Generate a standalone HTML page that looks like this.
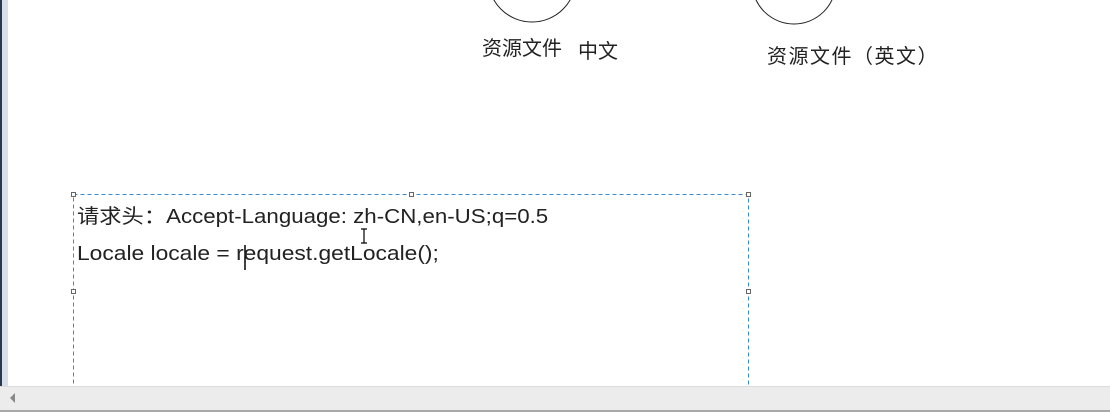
<!DOCTYPE html>
<html><head><meta charset="utf-8"><style>
body{margin:0;width:1110px;height:412px;overflow:hidden;background:#fff;position:relative;font-family:"Liberation Sans","Noto Sans CJK SC",sans-serif;color:#222}
.a{position:absolute}
.h{position:absolute;width:5px;height:5px;border:1px solid #666;background:#fff;box-sizing:border-box}
.t{position:absolute;font-size:20px;line-height:24px;white-space:nowrap;transform-origin:0 50%}
</style></head><body>
<div class="a" style="left:0;top:0;width:2px;height:386px;background:#2a3a4a"></div>
<div class="a" style="left:2px;top:0;width:6px;height:386px;background:#d6e0ec"></div>
<svg class="a" style="left:0;top:0" width="1110" height="412">
<circle cx="532" cy="-22" r="44" fill="none" stroke="#222" stroke-width="1"/>
<circle cx="794" cy="-18" r="42" fill="none" stroke="#222" stroke-width="1"/>
<rect x="73.5" y="194.5" width="675" height="200" fill="none" stroke="#3a8ad0" stroke-dasharray="4,3"/>
<line x1="245" y1="245" x2="245" y2="270" stroke="#000" stroke-width="1.5"/>
<path d="M361 229h6M364 229v14M361 243h6" stroke="#000" stroke-width="1.2" fill="none"/>
</svg>
<div class="h" style="left:71px;top:192px"></div>
<div class="h" style="left:409px;top:192px"></div>
<div class="h" style="left:746px;top:192px"></div>
<div class="h" style="left:71px;top:289px"></div>
<div class="h" style="left:746px;top:289px"></div>
<div class="t" style="left:482px;top:37px;font-size:20px">资源文件</div>
<div class="t" style="left:578px;top:40px;font-size:20px">中文</div>
<div class="t" style="left:767px;top:45px;font-size:20px;letter-spacing:1.5px">资源文件（英文）</div>
<div class="t" style="left:77px;top:205px;transform:scaleX(1.114)">请求头：Accept-Language: zh-CN,en-US;q=0.5</div>
<div class="t" style="left:77px;top:242px;transform:scaleX(1.14)">Locale locale = request.getLocale();</div>
<div class="a" style="left:0;top:386px;width:1110px;height:24px;background:#ececec;border-top:1px solid #dcdcdc"></div>
<div class="a" style="left:0;top:410px;width:1110px;height:2px;background:#a8a8a8"></div>
<div class="a" style="left:10px;top:393px;width:0;height:0;border-top:5px solid transparent;border-bottom:5px solid transparent;border-right:5px solid #888"></div>
</body></html>
